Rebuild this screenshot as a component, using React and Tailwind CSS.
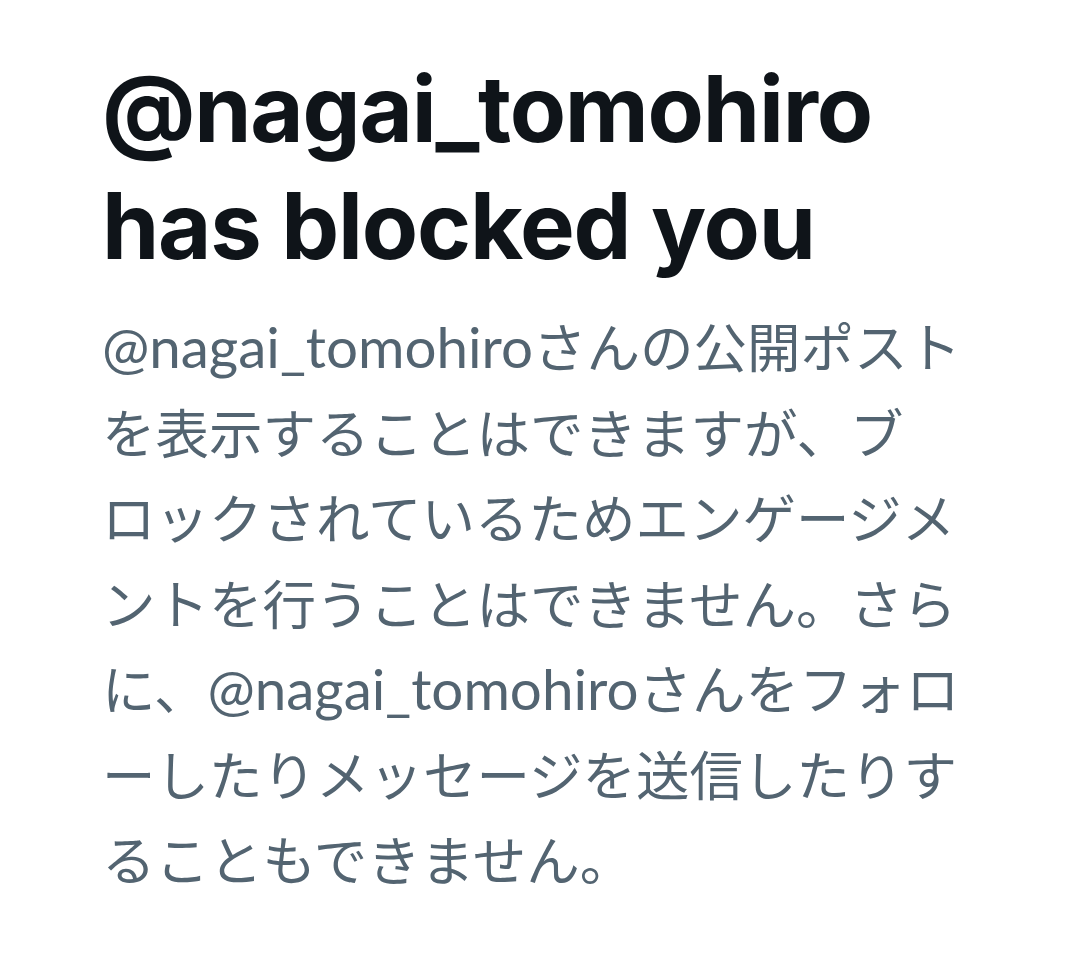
import React from 'react';

// Latin runs are drawn a bit larger than the kana, as in the reference
const L = ({ children }) => (
  <span className="text-[56.5px] leading-[60px]">{children}</span>
);

const bodyLines = [
  <><L>@nagai_tomohiro</L>さんの公開ポスト</>,
  <>を表示することはできますが、ブ</>,
  <>ロックされているためエンゲージメ</>,
  <>ントを行うことはできません。さら</>,
  <>に、<L>@nagai_tomohiro</L>さんをフォロ</>,
  <>ーしたりメッセージを送信したりす</>,
  <>ることもできません。</>,
];

export default function App() {
  return (
    <div className="min-h-[974px] w-[1080px] bg-white pl-[102px] pt-[50px]">
      {/* HEADING */}
      <h1
        className="text-[92px] font-bold leading-[117px] text-[#0f1419] tracking-[-1.2px]"
        style={{ fontFamily: 'Inter, "Noto Sans", sans-serif' }}
      >
        <div>@nagai_tomohiro</div>
        <div>has blocked you</div>
      </h1>

      {/* BODY */}
      <div
        className="mt-[21px] text-[53.5px] leading-[85.5px] text-[#536471]"
        style={{ fontFamily: 'Lato, "Noto Sans CJK JP", sans-serif' }}
      >
        {bodyLines.map((line, i) => (
          <div key={i} className="whitespace-nowrap">
            {line}
          </div>
        ))}
      </div>
    </div>
  );
}
